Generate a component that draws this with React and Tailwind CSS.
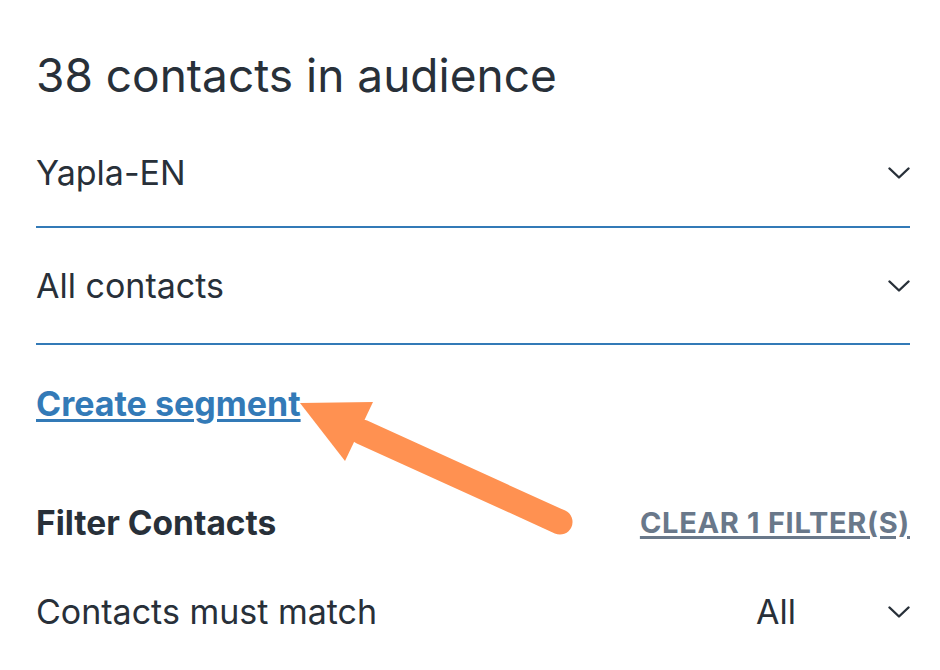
import React from "react";

function Chevron() {
  return (
    <svg width="22" height="12" viewBox="0 0 22 12" fill="none" className="shrink-0">
      <path d="M1.5 1.5 L11 10.5 L20.5 1.5" stroke="#283039" strokeWidth="2.4" strokeLinecap="round" strokeLinejoin="round" />
    </svg>
  );
}

export default function App() {
  return (
    <div className="relative w-[940px] h-[670px] bg-white overflow-hidden text-[#283039] font-['Inter',sans-serif]">
      <div className="pl-[36px] pr-[30px] pt-[47px]">
        <h1 className="text-[46px] leading-[56px] font-normal">38 contacts in audience</h1>
        <div className="mt-[17px] h-[108px] flex items-center justify-between border-b-2 border-[#337ab7]">
          <span className="text-[34px] leading-[40px]">Yapla-EN</span>
          <Chevron />
        </div>
        <div className="h-[117px] flex items-center justify-between border-b-2 border-[#337ab7]">
          <span className="text-[34px] leading-[40px]">All contacts</span>
          <Chevron />
        </div>
        <div className="mt-[39px] leading-[40px]">
          <a className="text-[34px] font-bold text-[#337ab7] underline underline-offset-[3px] decoration-[3px] leading-[40px]">Create segment</a>
        </div>
        <div className="mt-[73px] flex items-center justify-between">
          <span className="text-[33.5px] font-bold leading-[40px]">Filter Contacts</span>
          <a className="text-[29px] font-bold tracking-[0.7px] text-[#69788a] underline underline-offset-[3px] decoration-[3px] leading-[40px]">CLEAR 1 FILTER(S)</a>
        </div>
        <div className="mt-[49px] flex items-center justify-between">
          <span className="text-[34px] leading-[40px]">Contacts must match</span>
          <div className="flex items-center gap-[92px]">
            <span className="text-[34px] leading-[40px]">All</span>
            <Chevron />
          </div>
        </div>
      </div>
      <svg className="absolute left-0 top-0 pointer-events-none" width="940" height="670" viewBox="0 0 940 670">
        <line x1="362" y1="432" x2="560" y2="522" stroke="#ff9151" strokeWidth="25" strokeLinecap="round" />
        <polygon points="300,403 373,402 345,461" fill="#ff9151" />
      </svg>
    </div>
  );
}
